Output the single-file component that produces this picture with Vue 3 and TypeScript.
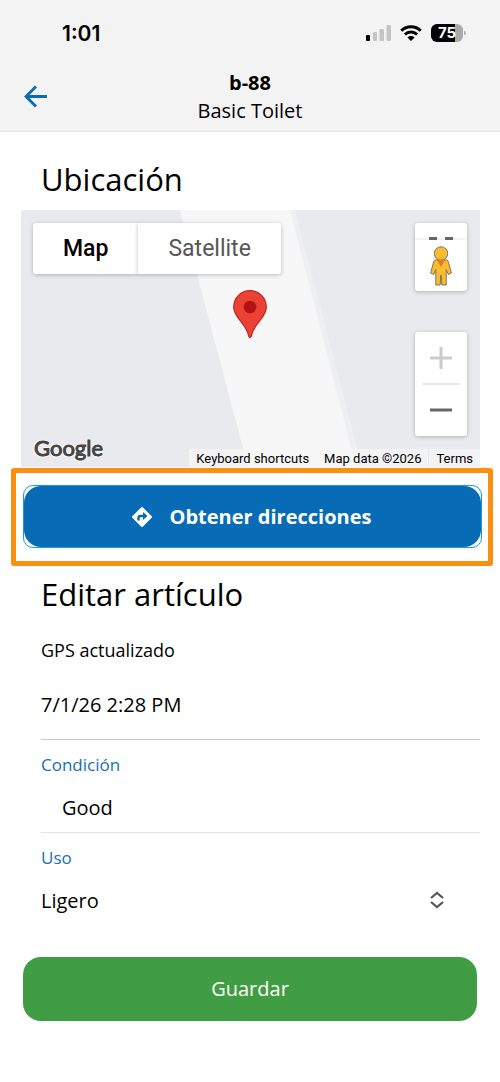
<script setup lang="ts">
import { ref } from 'vue'

const mapType = ref<'Map' | 'Satellite'>('Map')
const mapTypes = ['Map', 'Satellite'] as const
const condition = ref('Good')
const usage = ref('Ligero')
const usageOptions = ['Ligero', 'Moderado', 'Intenso']
</script>

<template>
  <div class="page">
    <header class="header">
      <div class="status">
        <span class="clock">1:01</span>
        <div class="indicators">
          <svg class="signal" width="26" height="18" viewBox="0 0 26 18" aria-hidden="true">
            <rect x="0" y="11" width="4" height="6" rx="1" fill="#000" />
            <rect x="7" y="8" width="4" height="9" rx="1" fill="#c5c5c5" />
            <rect x="13.500" y="5" width="4.500" height="12" rx="1" fill="#c5c5c5" />
            <rect x="20.500" y="1" width="4.500" height="16" rx="1" fill="#c5c5c5" />
          </svg>
          <svg class="wifi" width="22" height="18" viewBox="0 0 22 18" aria-hidden="true">
            <g fill="none" stroke="#000" stroke-width="3">
              <path d="M1.300 6.700a13.700 13.700 0 0 1 19.400 0" />
              <path d="M4.900 10.500a8.600 8.600 0 0 1 12.200 0" />
            </g>
            <path d="M7.400 13.400a5.100 5.100 0 0 1 7.200 0L11 17z" fill="#000" />
          </svg>
          <div class="battery"><span class="level">75</span></div>
        </div>
      </div>
      <div class="titlebar">
        <button class="back" type="button" aria-label="Volver">
          <svg width="24" height="24" viewBox="0 0 24 24" aria-hidden="true">
            <path d="M23 11.500H3M12 1.500L2 11.500l10 10" fill="none" stroke="#086bb5" stroke-width="2.800" />
          </svg>
        </button>
        <div class="titles">
          <h1>b-88</h1>
          <p>Basic Toilet</p>
        </div>
      </div>
    </header>

    <main>
      <h2 class="location-title">Ubicación</h2>
      <section class="map" aria-label="Ubicación">
        <svg class="roads" viewBox="0 0 459 257" preserveAspectRatio="xMidYMid slice" aria-hidden="true">
          <path d="M159 0H274L341 257H227z" fill="#eeeff3" />
          <path d="M159 0H269L335 257H227z" fill="#f7f7f8" />
        </svg>
        <svg class="pin" width="34" height="48" viewBox="0 0 34 48" aria-hidden="true">
          <path
            d="M17 .7C8 .7.700 7.800.700 16.800c0 5.200 2.200 8.600 6 13.300 4.500 5.600 7.700 9.400 8.800 15.400.3 1.500.6 2 1.500 2s1.200-.5 1.500-2c1.100-6 4.300-9.800 8.800-15.400 3.800-4.700 6-8.100 6-13.300C33.300 7.800 26 .7 17 .7z"
            fill="#ea4335" stroke="#c5221f" stroke-width="1.200" />
          <circle cx="17" cy="17" r="6.300" fill="#b31412" />
        </svg>
        <div class="types">
          <button v-for="t in mapTypes" :key="t" type="button" :class="{ active: mapType === t }" @click="mapType = t">
            {{ t }}
          </button>
        </div>
        <div class="tools">
          <button class="fullscreen" type="button" aria-label="Fullscreen">
            <svg width="24" height="3" viewBox="0 0 24 3" aria-hidden="true">
              <path d="M0 0h8v3H0zM16 0h8v3h-8z" fill="#666" />
            </svg>
          </button>
          <button class="pegman" type="button" aria-label="Street View">
            <svg width="22" height="40" viewBox="0 0 22 40" aria-hidden="true">
              <g fill="#fbbc2c" stroke="#7b7564" stroke-width="1">
                <path d="M6 14h10c1.400 0 2 .6 2.300 1.800L21.400 27l-3 1.600-2.200-5V39H11.800l-.5-10h-.6l-.5 10H5.800V23.600l-2.200 5-3-1.600 3.100-11.200C4 14.600 4.600 14 6 14z" />
                <circle cx="11" cy="7.500" r="6.700" />
              </g>
              <path d="M7 14h8l-4 7z" fill="#e37b29" />
            </svg>
          </button>
          <div class="zoom">
            <button type="button" aria-label="Zoom in">
              <svg width="22" height="22" viewBox="0 0 22 22" aria-hidden="true">
                <path d="M0 11h22M11 0v22" stroke="#ccc" stroke-width="3" />
              </svg>
            </button>
            <button type="button" aria-label="Zoom out">
              <svg width="22" height="22" viewBox="0 0 22 22" aria-hidden="true">
                <path d="M0 11h22" stroke="#666" stroke-width="3" />
              </svg>
            </button>
          </div>
        </div>
        <span class="google">Google</span>
        <div class="legal">
          <button type="button">Keyboard shortcuts</button>
          <span>Map data ©2026</span>
          <a href="#terms">Terms</a>
        </div>
      </section>

      <div class="highlight">
        <button class="directions" type="button">
          <span class="fill">
            <svg width="24" height="24" viewBox="0 0 24 24" aria-hidden="true">
              <path
                d="M21.710 11.290l-9-9a1 1 0 0 0-1.410 0l-9 9a1 1 0 0 0 0 1.410l9 9a1 1 0 0 0 1.410 0l9-9a1 1 0 0 0 0-1.410z"
                fill="#fff" />
              <path d="M8.500 15.500V13a2 2 0 0 1 2-2H14" fill="none" stroke="#086bb5" stroke-width="2.400" />
              <path d="M13 7l4.500 4L13 15z" fill="#086bb5" />
            </svg>
            Obtener direcciones
          </span>
        </button>
      </div>

      <form @submit.prevent>
        <h2 class="edit-title">Editar artículo</h2>
        <div class="readonly">
          <p class="caption">GPS actualizado</p>
          <p class="value">7/1/26 2:28 PM</p>
        </div>
        <div class="field lined">
          <label for="condition">Condición</label>
          <input id="condition" v-model="condition" type="text" />
        </div>
        <div class="field">
          <label for="usage">Uso</label>
          <div class="select">
            <select id="usage" v-model="usage">
              <option v-for="o in usageOptions" :key="o">{{ o }}</option>
            </select>
            <svg width="14" height="18" viewBox="0 0 14 18" aria-hidden="true">
              <path d="M1 7l6-5 6 5M1 11l6 5 6-5" fill="none" stroke="#555" stroke-width="2.200" />
            </svg>
          </div>
        </div>
        <button class="save" type="submit">Guardar</button>
      </form>
    </main>
  </div>
</template>

<style>
body {
  margin: 0;
  background: #fff;
}
</style>

<style scoped>
.page {
  font-family: "Open Sans", "Noto Sans", sans-serif;
  font-size: 20px;
  line-height: 28px;
  color: #000;
}
.page * {
  box-sizing: border-box;
}
h1,
h2,
p {
  margin: 0;
  font-weight: 400;
}
button,
input,
select {
  margin: 0;
  padding: 0;
  border: 0;
  background: none;
  color: inherit;
  font: inherit;
  cursor: pointer;
}
svg {
  display: block;
  flex: none;
}
.header {
  background: #f3f3f3;
  border-bottom: 1px solid #e2e2e2;
  padding-bottom: 6px;
}
.status {
  display: flex;
  align-items: center;
  justify-content: space-between;
  height: 69px;
  padding: 0 34px 3px 62px;
  font-family: Inter, sans-serif;
}
.clock {
  padding-top: 2px;
  font-size: 21px;
  font-weight: 600;
}
.indicators {
  display: flex;
  align-items: center;
}
.wifi {
  margin: 0 9px 0 8px;
}
.battery {
  position: relative;
  width: 32px;
  height: 18px;
  border-radius: 6px;
  background: linear-gradient(to right, #000 75%, #aaa 75%);
  margin-right: 3px;
}
.battery::after {
  content: "";
  position: absolute;
  left: 33px;
  top: 7px;
  width: 2px;
  height: 4px;
  border-radius: 0 2px 2px 0;
  background: #aaa;
}
.level {
  display: block;
  text-align: center;
  color: #fff;
  font-size: 15px;
  font-weight: 700;
  line-height: 18px;
}
.titlebar {
  display: grid;
  grid-template-columns: 1fr auto 1fr;
  align-items: center;
}
.back {
  justify-self: start;
  margin-left: 24px;
}
.titles {
  grid-column: 2;
  text-align: center;
}
h1 {
  font-size: 20px;
  font-weight: 700;
}
h2 {
  padding-left: 41px;
  font-size: 31px;
  line-height: 40px;
}
.location-title {
  padding-top: 27px;
  padding-bottom: 11px;
}
.map {
  position: relative;
  height: 257px;
  margin: 0 20px 0 21px;
  background: #e8eaee;
  overflow: hidden;
  font-family: Roboto, sans-serif;
}
.roads {
  width: 100%;
  height: 100%;
}
.pin {
  position: absolute;
  left: 50%;
  top: 80px;
  margin-left: -18px;
}
.types {
  position: absolute;
  left: 12px;
  top: 13px;
  display: flex;
}
.types button {
  height: 51px;
  padding: 0 30px;
  background: #fff;
  border-radius: 0 3px 3px 0;
  box-shadow: 0 1px 4px rgba(0, 0, 0, 0.25);
  color: #565656;
  font-size: 23px;
}
.types button:first-child {
  border-radius: 3px 0 0 3px;
}
.types .active {
  color: #000;
  font-weight: 500;
}
.tools {
  position: absolute;
  right: 13px;
  top: 13px;
  width: 52px;
}
.tools button {
  display: flex;
  align-items: center;
  justify-content: center;
  width: 100%;
  height: 51px;
}
.tools .fullscreen,
.tools .pegman,
.zoom {
  background: #fff;
  border-radius: 3px;
  box-shadow: 0 1px 4px rgba(0, 0, 0, 0.25);
}
.tools .fullscreen {
  align-items: flex-start;
  height: 17px;
  padding-top: 14px;
  border-radius: 3px 3px 0 0;
}
.tools .pegman {
  border-radius: 0 0 3px 3px;
}
.zoom {
  margin-top: 41px;
}
.zoom button {
  height: 52px;
}
.zoom button + button::before {
  content: "";
  position: absolute;
  left: 7px;
  right: 7px;
  margin-bottom: 52px;
  height: 2px;
  background: #e6e6e6;
}
.google {
  position: absolute;
  left: 13px;
  bottom: 5px;
  color: #444;
  font-family: Lato, sans-serif;
  font-size: 22px;
  -webkit-text-stroke: 1px #444;
  text-shadow: 0 0 2px #fff, 1px 1px 1px #fff, -1px -1px 1px #fff, 1px -1px 1px #fff, -1px 1px 1px #fff;
}
.legal {
  position: absolute;
  right: 0;
  bottom: 0;
  display: flex;
  gap: 1px;
  font-size: 13px;
  line-height: 16px;
}
.legal > * {
  padding: 2px 7px 0;
  background: rgba(245, 245, 245, 0.8);
  color: #000;
  text-decoration: none;
}
.highlight {
  margin: 1px 7px 0 11px;
  padding: 12px 6px 13px 7px;
  border: 5px solid #f99012;
  border-radius: 3px;
}
.directions {
  display: block;
  width: 100%;
  height: 63px;
  border: 1px solid #149be3;
  border-radius: 10px;
  color: #fff;
  font-weight: 700;
}
.fill {
  display: flex;
  align-items: center;
  justify-content: center;
  gap: 16px;
  height: 100%;
  padding-right: 4px;
  border-radius: 17px;
  background: #086bb5;
}
.edit-title {
  padding-top: 8px;
}
.readonly {
  margin: 24px 20px 0 41px;
  padding-bottom: 20px;
  border-bottom: 1px solid #c8c8c8;
}
.caption {
  font-size: 18px;
  line-height: 24px;
}
.value {
  margin-top: 29px;
}
.field {
  margin: 0 20px 0 41px;
  padding-top: 13px;
}
.lined {
  padding-bottom: 10px;
  border-bottom: 1px solid #e2e2e2;
}
.field label {
  display: block;
  margin-bottom: 17px;
  color: #1470b8;
  font-size: 17px;
  line-height: 24px;
}
.field input {
  display: block;
  width: 100%;
  height: 28px;
  padding-left: 21px;
}
.select {
  position: relative;
}
.select select {
  display: block;
  width: 100%;
  height: 28px;
  appearance: none;
}
.select svg {
  position: absolute;
  right: 36px;
  top: 4px;
  pointer-events: none;
}
.save {
  display: block;
  width: calc(100% - 46px);
  height: 64px;
  margin: 42px 23px 61px;
  border-radius: 18px;
  background: #409d43;
  color: #fff;
}
</style>
